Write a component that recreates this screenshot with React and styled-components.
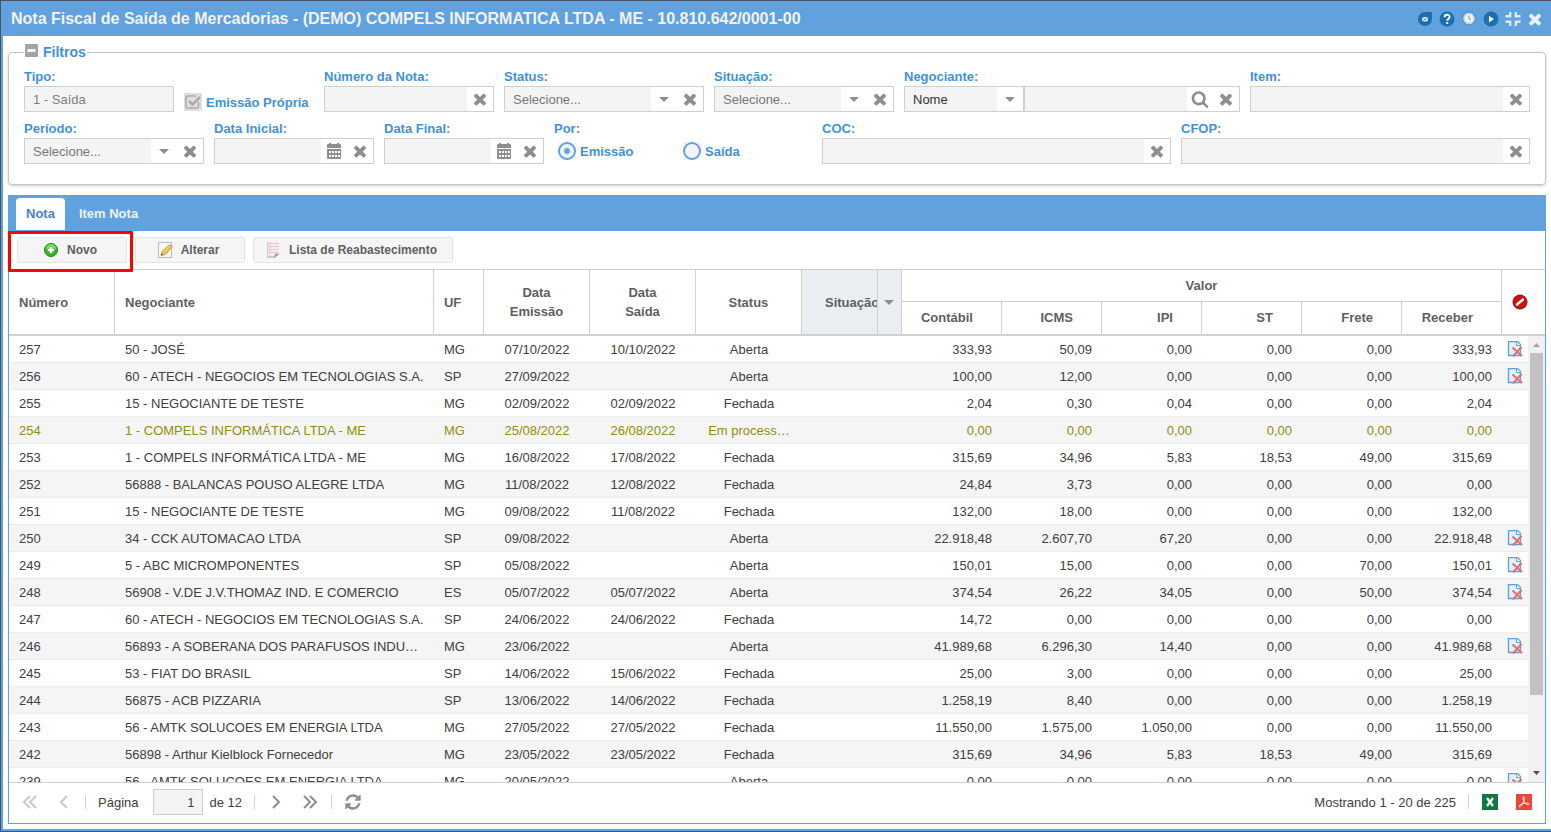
import { useState } from 'react';
import styled, { createGlobalStyle, css } from 'styled-components';

const NOTAS = [
  ['257', '50 - JOSÉ', 'MG', '07/10/2022', '10/10/2022', 'Aberta', '333,93', '50,09', '0,00', '0,00', '0,00', '333,93'],
  ['256', '60 - ATECH - NEGOCIOS EM TECNOLOGIAS S.A.', 'SP', '27/09/2022', '', 'Aberta', '100,00', '12,00', '0,00', '0,00', '0,00', '100,00'],
  ['255', '15 - NEGOCIANTE DE TESTE', 'MG', '02/09/2022', '02/09/2022', 'Fechada', '2,04', '0,30', '0,04', '0,00', '0,00', '2,04'],
  ['254', '1 - COMPELS INFORMÁTICA LTDA - ME', 'MG', '25/08/2022', '26/08/2022', 'Em process…', '0,00', '0,00', '0,00', '0,00', '0,00', '0,00'],
  ['253', '1 - COMPELS INFORMÁTICA LTDA - ME', 'MG', '16/08/2022', '17/08/2022', 'Fechada', '315,69', '34,96', '5,83', '18,53', '49,00', '315,69'],
  ['252', '56888 - BALANCAS POUSO ALEGRE LTDA', 'MG', '11/08/2022', '12/08/2022', 'Fechada', '24,84', '3,73', '0,00', '0,00', '0,00', '0,00'],
  ['251', '15 - NEGOCIANTE DE TESTE', 'MG', '09/08/2022', '11/08/2022', 'Fechada', '132,00', '18,00', '0,00', '0,00', '0,00', '132,00'],
  ['250', '34 - CCK AUTOMACAO LTDA', 'SP', '09/08/2022', '', 'Aberta', '22.918,48', '2.607,70', '67,20', '0,00', '0,00', '22.918,48'],
  ['249', '5 - ABC MICROMPONENTES', 'SP', '05/08/2022', '', 'Aberta', '150,01', '15,00', '0,00', '0,00', '70,00', '150,01'],
  ['248', '56908 - V.DE J.V.THOMAZ IND. E COMERCIO', 'ES', '05/07/2022', '05/07/2022', 'Aberta', '374,54', '26,22', '34,05', '0,00', '50,00', '374,54'],
  ['247', '60 - ATECH - NEGOCIOS EM TECNOLOGIAS S.A.', 'SP', '24/06/2022', '24/06/2022', 'Fechada', '14,72', '0,00', '0,00', '0,00', '0,00', '0,00'],
  ['246', '56893 - A SOBERANA DOS PARAFUSOS INDU…', 'MG', '23/06/2022', '', 'Aberta', '41.989,68', '6.296,30', '14,40', '0,00', '0,00', '41.989,68'],
  ['245', '53 - FIAT DO BRASIL', 'SP', '14/06/2022', '15/06/2022', 'Fechada', '25,00', '3,00', '0,00', '0,00', '0,00', '25,00'],
  ['244', '56875 - ACB PIZZARIA', 'SP', '13/06/2022', '14/06/2022', 'Fechada', '1.258,19', '8,40', '0,00', '0,00', '0,00', '1.258,19'],
  ['243', '56 - AMTK SOLUCOES EM ENERGIA LTDA', 'MG', '27/05/2022', '27/05/2022', 'Fechada', '11.550,00', '1.575,00', '1.050,00', '0,00', '0,00', '11.550,00'],
  ['242', '56898 - Arthur Kielblock Fornecedor', 'MG', '23/05/2022', '23/05/2022', 'Fechada', '315,69', '34,96', '5,83', '18,53', '49,00', '315,69'],
  ['239', '56 - AMTK SOLUCOES EM ENERGIA LTDA', 'MG', '20/05/2022', '', 'Aberta', '0,00', '0,00', '0,00', '0,00', '0,00', '0,00'],
];

const VALORES = ['Contábil', 'ICMS', 'IPI', 'ST', 'Frete', 'Receber'];

const PATHS = {
  times: 'M1490 1322q0 40-28 68l-136 136q-28 28-68 28t-68-28l-294-294-294 294q-28 28-68 28t-68-28l-136-136q-28-28-28-68t28-68l294-294-294-294q-28-28-28-68t28-68l136-136q28-28 68-28t68 28l294 294 294-294q28-28 68-28t68 28l136 136q28 28 28 68t-28 68l-294 294 294 294q28 28 28 68z',
  search: 'M1216 832q0-185-131.5-316.5t-316.5-131.5-316.5 131.5-131.5 316.5 131.5 316.5 316.5 131.5 316.5-131.5 131.5-316.5zm512 832q0 52-38 90t-90 38q-54 0-90-38l-343-342q-179 124-399 124-143 0-273.5-55.5t-225-150-150-225-55.5-273.5 55.5-273.5 150-225 225-150 273.5-55.5 273.5 55.5 225 150 150 225 55.5 273.5q0 220-124 399l343 343q37 37 37 90z',
  refresh: 'M1639 1056q0 5-1 7-64 268-268 434.5t-478 166.5q-146 0-282.5-55t-243.5-157l-129 129q-19 19-45 19t-45-19-19-45v-448q0-26 19-45t45-19h448q26 0 45 19t19 45-19 45l-137 137q71 66 161 102t187 36q134 0 250-65t186-179q11-17 53-117 8-23 30-23h192q13 0 22.5 9.5t9.5 22.5zm25-800v448q0 26-19 45t-45 19h-448q-26 0-45-19t-19-45 19-45l138-138q-148-137-349-137-134 0-250 65t-186 179q-11 17-53 117-8 23-30 23h-199q-13 0-22.5-9.5t-9.5-22.5v-7q65-268 270-434.5t480-166.5q146 0 284 55.5t245 156.5l130-129q19-19 45-19t45 19 19 45z',
};

function Glyph({ name, size }) {
  return (
    <svg width={size} height={size} viewBox="0 0 1792 1792" fill="currentColor" aria-hidden="true">
      <path d={PATHS[name]} />
    </svg>
  );
}

function Caret() {
  return (
    <svg width="10" height="5" viewBox="0 0 10 5" fill="currentColor" aria-hidden="true">
      <path d="M0 0h10L5 5z" />
    </svg>
  );
}

function Calendar() {
  return (
    <svg width="14" height="16" viewBox="0 0 14 16" fill="currentColor" aria-hidden="true">
      <path d="M2 0h2v1h6V0h2v1h1a1 1 0 0 1 1 1v3H0V2a1 1 0 0 1 1-1h1z" />
      <path fillRule="evenodd" d="M0 6h14v9a1 1 0 0 1-1 1H1a1 1 0 0 1-1-1zM2 8v2h2V8zM5 8v2h2V8zM8 8v2h2V8zM11 8v2h2V8zM2 12v2h2v-2zM5 12v2h2v-2zM8 12v2h2v-2zM11 12v2h2v-2z" />
    </svg>
  );
}

function Arrows({ left, double }) {
  const d = left ? 'M11 2L5 8l6 6' : 'M5 2l6 6-6 6';
  const dd = left ? 'M8 2L2 8l6 6M14 2L8 8l6 6' : 'M2 2l6 6-6 6M8 2l6 6-6 6';
  return (
    <svg width="16" height="16" viewBox="0 0 16 16" fill="none" stroke="currentColor" strokeWidth="2" aria-hidden="true">
      <path d={double ? dd : d} />
    </svg>
  );
}

function AddIcon() {
  return (
    <svg width="16" height="16" viewBox="0 0 16 16" aria-hidden="true">
      <circle cx="8" cy="8" r="6.500" fill="#35b521" stroke="#1d8a16" />
      <path d="M3 7a5 5 0 0 1 10 0c-3 1.500-7 1.500-10 0z" fill="#84d96f" />
      <path d="M6.500 4.500h3v2h2v3h-2v2h-3v-2h-2v-3h2z" fill="#fff" stroke="#2c9c1f" strokeWidth=".5" />
    </svg>
  );
}

function EditIcon() {
  return (
    <svg width="16" height="16" viewBox="0 0 16 16" aria-hidden="true">
      <rect x="1.500" y=".5" width="13" height="15" fill="#f8fafd" stroke="#b4bcc8" />
      <path d="M4 13.500l1-4L12 3l3 2.500-7 7z" fill="#f5c04c" stroke="#c08427" strokeWidth=".8" />
      <path d="M6 10l6.500-6" stroke="#fde6a0" />
      <path d="M12 3l1-1 3 2.500-1 1z" fill="#e9a08f" />
      <path d="M4 13.500l.5-2 1.500 1.300z" fill="#555" />
    </svg>
  );
}

function ListIcon() {
  return (
    <svg width="16" height="16" viewBox="0 0 16 16" aria-hidden="true">
      <path d="M2 0h12v12l-4 4H2z" fill="#f3eeee" />
      <path d="M2 0h1v16H2z" fill="#d0d0d0" />
      <path d="M3 1.500h11M3 4.500h11M3 7.500h11M3 10.500h11" stroke="#efc4c4" />
      <path d="M5 0v15" stroke="#e3c4c4" strokeWidth=".6" />
      <path d="M2 14h8l4-3v1l-4 4H2z" fill="#c9c9c9" />
      <path d="M9 16l1-4.500 4 .5z" fill="#9d9d9d" />
    </svg>
  );
}

function BlockIcon() {
  return (
    <svg width="16" height="16" viewBox="0 0 16 16" aria-hidden="true">
      <circle cx="8" cy="8" r="7" fill="#d90d0d" stroke="#7d1010" />
      <path d="M5 10.500l6-5" stroke="#fff" strokeWidth="2.400" strokeLinecap="round" />
    </svg>
  );
}

function CancelIcon() {
  return (
    <svg width="16" height="16" viewBox="0 0 16 16" aria-hidden="true">
      <path d="M1.500.5h9l3 3v11h-12z" fill="#e3f0fd" stroke="#5c9fe6" strokeWidth="1.300" />
      <path d="M9.500.5v4h4" fill="#fff" stroke="#5c9fe6" />
      <path d="M5.500 6.500l9.500 8.500M14.500 6L6 15.500" stroke="#e2726e" strokeWidth="2.200" />
    </svg>
  );
}

function ExcelIcon() {
  return (
    <svg width="16" height="16" viewBox="0 0 16 16" aria-hidden="true">
      <path d="M0 0h16v16H0z" fill="#0e7a41" />
      <path d="M5 4l6 8M11 4l-6 8" stroke="#fff" strokeWidth="2.200" />
    </svg>
  );
}

function PdfIcon() {
  return (
    <svg width="16" height="16" viewBox="0 0 16 16" aria-hidden="true">
      <path d="M0 0h16v16H0z" fill="#e8473a" />
      <path d="M7.500 2.500c1.500 0 .8 3.500-.3 6-1 2.200-2.600 4.500-3.900 4.300-1-.3.200-2 2.700-2.800 2.600-.9 6.600-1.300 6.900-.1.200 1.300-3 .5-4.400-1.400C7 6.500 6.500 2.700 7.500 2.500z" fill="none" stroke="#fff" strokeWidth=".9" />
    </svg>
  );
}

function Filtro({ id, label, largura, children }) {
  return (
    <Campo $largura={largura}>
      <Rotulo htmlFor={id}>{label}</Rotulo>
      <Caixa>{children}</Caixa>
    </Campo>
  );
}

function Limpar() {
  return (
    <Gatilho type="button" aria-label="Limpar">
      <Glyph name="times" size={18} />
    </Gatilho>
  );
}

function Combo({ id, label, largura }) {
  return (
    <Filtro id={id} label={label} largura={largura}>
      <Selecao id={id}>
        <option>Selecione...</option>
      </Selecao>
      <Seta><Caret /></Seta>
      <Limpar />
    </Filtro>
  );
}

function CampoData({ id, label }) {
  return (
    <Filtro id={id} label={label} largura={160}>
      <Entrada id={id} />
      <Gatilho type="button" aria-label="Abrir calendário"><Calendar /></Gatilho>
      <Limpar />
    </Filtro>
  );
}

function Colunas({ ultima }) {
  return (
    <colgroup>
      <Coluna $largura={106} />
      <Coluna />
      <Coluna $largura={50} />
      <Coluna $largura={106} />
      <Coluna $largura={106} />
      <Coluna $largura={106} />
      <Coluna $largura={100} />
      {VALORES.map((nome) => <Coluna key={nome} $largura={100} />)}
      <Coluna $largura={ultima} />
    </colgroup>
  );
}

function Titulo() {
  return (
    <BarraTitulo>
      <h1>Nota Fiscal de Saída de Mercadorias - (DEMO) COMPELS INFORMATICA LTDA - ME - 10.810.642/0001-00</h1>
      <Ferramentas>
        <button type="button" aria-label="Mensagens">
          <svg width="16" height="16" viewBox="0 0 16 16">
            <path d="M8 1h5.500a1.500 1.500 0 0 1 1.500 1.500V8A7 7 0 1 1 8 1z" fill="#1f6fae" />
            <ellipse cx="8" cy="8.300" rx="3" ry="2.200" fill="#e6f2fb" />
            <path d="M6.500 8.800l3-1" stroke="#1f6fae" />
          </svg>
        </button>
        <button type="button" aria-label="Ajuda">
          <svg width="16" height="16" viewBox="0 0 16 16">
            <circle cx="8" cy="8" r="7.500" fill="#1b6fae" />
            <path d="M5.500 6.200C5.500 2.900 10.700 3 10.600 6c0 1.800-2.400 1.800-2.400 3.800" fill="none" stroke="#fff" strokeWidth="1.900" />
            <path d="M7.200 11h2v2h-2z" fill="#fff" />
          </svg>
        </button>
        <button type="button" aria-label="Histórico">
          <svg width="16" height="16" viewBox="0 0 16 16">
            <circle cx="8" cy="7.500" r="6.500" fill="#a9cfe0" stroke="#4d86b3" />
            <circle cx="8" cy="7.500" r="4.500" fill="#eef3f4" stroke="#d5e6ec" />
            <path d="M8 4.500v3.500l2 1" fill="none" stroke="#7c919d" />
          </svg>
        </button>
        <button type="button" aria-label="Iniciar">
          <svg width="16" height="16" viewBox="0 0 16 16">
            <circle cx="8" cy="8" r="7.500" fill="#1f6fae" />
            <path d="M6 5l5 3-5 3.500z" fill="#fff" />
          </svg>
        </button>
        <button type="button" aria-label="Restaurar">
          <svg width="16" height="16" viewBox="0 0 16 16" fill="none" stroke="#dcebf9" strokeWidth="2.400">
            <path d="M5.200 1v4.200H.5M10.800 1v4.200h4.700M.5 10.800h4.700V15M15.500 10.800h-4.700V15" />
          </svg>
        </button>
        <button type="button" aria-label="Fechar">
          <Glyph name="times" size={18} />
        </button>
      </Ferramentas>
    </BarraTitulo>
  );
}

function Filtros() {
  const [por, setPor] = useState('emissao');

  return (
    <Quadro>
      <legend>
        <button type="button" aria-label="Recolher filtros">
          <svg width="13" height="13" viewBox="0 0 13 13">
            <rect width="13" height="13" rx="1" fill="#a3a3a3" />
            <path d="M2.500 5h8v3h-8z" fill="#fff" />
          </svg>
        </button>
        Filtros
      </legend>

      <Linha>
        <Filtro id="tipo" label="Tipo:" largura={150}>
          <Entrada id="tipo" defaultValue="1 - Saída" disabled />
        </Filtro>
        <Propria htmlFor="propria">
          <Marca>
            <input id="propria" type="checkbox" defaultChecked disabled />
            <svg width="18" height="18" viewBox="0 0 18 18" fill="none" stroke="#aaa" aria-hidden="true">
              <path d="M14.500 9v4a2 2 0 0 1-2 2H4a2 2 0 0 1-2-2V5a2 2 0 0 1 2-2h8" strokeWidth="1.500" />
              <path d="M5 8l3.500 3.500L16 4" strokeWidth="2.500" />
            </svg>
          </Marca>
          Emissão Própria
        </Propria>
        <Filtro id="numero" label="Número da Nota:" largura={170}>
          <Entrada id="numero" />
          <Limpar />
        </Filtro>
        <Combo id="status" label="Status:" largura={200} />
        <Combo id="situacao" label="Situação:" largura={180} />
        <Campo $largura={336}>
          <Rotulo htmlFor="negociante">Negociante:</Rotulo>
          <Par>
            <Caixa>
              <Selecao $forte aria-label="Buscar por">
                <option>Nome</option>
              </Selecao>
              <Seta><Caret /></Seta>
            </Caixa>
            <Caixa>
              <Entrada id="negociante" />
              <Gatilho type="button" aria-label="Pesquisar"><Glyph name="search" size={18} /></Gatilho>
              <Limpar />
            </Caixa>
          </Par>
        </Campo>
        <Filtro id="item" label="Item:">
          <Entrada id="item" />
          <Limpar />
        </Filtro>
      </Linha>

      <Linha>
        <Combo id="periodo" label="Período:" largura={180} />
        <CampoData id="inicial" label="Data Inicial:" />
        <CampoData id="final" label="Data Final:" />
        <Campo $largura={258} role="radiogroup" aria-labelledby="por">
          <Rotulo as="span" id="por">Por:</Rotulo>
          <Opcoes>
            <label>
              <span><input type="radio" name="por" checked={por === 'emissao'} onChange={() => setPor('emissao')} /></span>
              Emissão
            </label>
            <label>
              <span><input type="radio" name="por" checked={por === 'saida'} onChange={() => setPor('saida')} /></span>
              Saída
            </label>
          </Opcoes>
        </Campo>
        <Filtro id="coc" label="COC:">
          <Entrada id="coc" />
          <Limpar />
        </Filtro>
        <Filtro id="cfop" label="CFOP:">
          <Entrada id="cfop" />
          <Limpar />
        </Filtro>
      </Linha>
    </Quadro>
  );
}

function Grade() {
  return (
    <>
      <Cabecalho>
        <Colunas ultima={43} />
        <thead>
          <tr>
            <Th rowSpan={2}>Número</Th>
            <Th rowSpan={2}>Negociante</Th>
            <Th rowSpan={2}>UF</Th>
            <Th rowSpan={2} $alinhar="center">Data<br />Emissão</Th>
            <Th rowSpan={2} $alinhar="center">Data<br />Saída</Th>
            <Th rowSpan={2} $alinhar="center">Status</Th>
            <ThAtivo rowSpan={2}>
              <div>
                <span>Situação</span>
                <button type="button" aria-label="Opções da coluna"><Caret /></button>
              </div>
            </ThAtivo>
            <ThGrupo colSpan={6}>Valor</ThGrupo>
            <Th rowSpan={2} $ultima><BlockIcon /></Th>
          </tr>
          <tr>
            {VALORES.map((nome) => <ThValor key={nome}>{nome}</ThValor>)}
          </tr>
        </thead>
      </Cabecalho>

      <Corpo>
        <Rolagem>
          <Tabela>
            <Colunas ultima={26} />
            <tbody>
              {NOTAS.map(([numero, negociante, uf, emissao, saida, status, ...valores]) => (
                <Nota key={numero} $processando={numero === '254'}>
                  <Td>{numero}</Td>
                  <Td>{negociante}</Td>
                  <Td>{uf}</Td>
                  <Td $alinhar="center">{emissao}</Td>
                  <Td $alinhar="center">{saida}</Td>
                  <Td $alinhar="center">{status}</Td>
                  <Td />
                  {valores.map((valor, i) => <Td key={VALORES[i]} $alinhar="right">{valor}</Td>)}
                  <TdAcao>
                    {status === 'Aberta' && <button type="button" aria-label={`Cancelar nota ${numero}`}><CancelIcon /></button>}
                  </TdAcao>
                </Nota>
              ))}
            </tbody>
          </Tabela>
        </Rolagem>
        <Barra aria-hidden="true">
          <svg width="17" height="17" viewBox="0 0 17 17"><path d="M5 11h7L8.500 7z" fill="#a3a3a3" /></svg>
          <div><span /></div>
          <svg width="17" height="17" viewBox="0 0 17 17"><path d="M5 6h7l-3.500 4z" fill="#505050" /></svg>
        </Barra>
      </Corpo>
    </>
  );
}

function Paginacao() {
  return (
    <Rodape>
      <BotaoPagina type="button" disabled aria-label="Primeira página"><Arrows left double /></BotaoPagina>
      <BotaoPagina type="button" disabled aria-label="Página anterior"><Arrows left /></BotaoPagina>
      <Separador />
      <PaginaAtual>
        <label htmlFor="pagina">Página</label>
        <input id="pagina" defaultValue="1" />
        <span>de 12</span>
      </PaginaAtual>
      <Separador />
      <BotaoPagina type="button" aria-label="Próxima página"><Arrows /></BotaoPagina>
      <BotaoPagina type="button" aria-label="Última página"><Arrows double /></BotaoPagina>
      <Separador />
      <BotaoPagina type="button" aria-label="Atualizar"><Glyph name="refresh" size={18} /></BotaoPagina>
      <Resumo>Mostrando 1 - 20 de 225</Resumo>
      <Separador />
      <BotaoPagina type="button" aria-label="Exportar para Excel"><ExcelIcon /></BotaoPagina>
      <BotaoPagina type="button" aria-label="Exportar para PDF"><PdfIcon /></BotaoPagina>
    </Rodape>
  );
}

export default function App() {
  return (
    <Tela>
      <Global />
      <Janela>
        <Titulo />
        <Conteudo>
          <Filtros />
          <Painel>
            <Abas role="tablist">
              <Aba type="button" role="tab" aria-selected="true" $ativa>Nota</Aba>
              <Aba type="button" role="tab" aria-selected="false">Item Nota</Aba>
            </Abas>
            <Acoes>
              <Destaque>
                <Botao type="button" $largura={110}><AddIcon />Novo</Botao>
              </Destaque>
              <Botao type="button" $largura={110}><EditIcon />Alterar</Botao>
              <Botao type="button" $largura={200}><ListIcon />Lista de Reabastecimento</Botao>
            </Acoes>
            <Grade />
            <Paginacao />
          </Painel>
        </Conteudo>
      </Janela>
    </Tela>
  );
}

const Global = createGlobalStyle`
  * {
    box-sizing: border-box;
  }

  body {
    margin: 0;
    font-family: "Liberation Sans", Arial, sans-serif;
    font-size: 13px;
    color: #404040;
  }

  button, input, select {
    margin: 0;
    font: inherit;
    color: inherit;
  }

  button {
    padding: 0;
    border: 0;
    background: none;
    cursor: pointer;
  }

  svg {
    display: block;
    flex: none;
  }
`

const Tela = styled.div`
  height: 100vh;
  min-height: 500px;
  padding: 1px 0 1px 1px;
  background: #44546a;
`

const Janela = styled.div`
  height: 100%;
  display: flex;
  flex-direction: column;
  border-left: 2px solid #60a1de;
  border-bottom: 2px solid #60a1de;
  background: #fff;
`

const BarraTitulo = styled.header`
  height: 35px;
  padding: 0 8px;
  display: flex;
  align-items: center;
  justify-content: space-between;
  background: #60a1de;

  h1 {
    margin: 0;
    font-size: 16px;
    line-height: 20px;
    color: #f2f2f2;
  }
`

const Ferramentas = styled.div`
  display: flex;
  gap: 6px;
  color: #e9f2fb;

  button {
    width: 16px;
    height: 16px;
    display: flex;
    align-items: center;
    justify-content: center;
  }
`

const Conteudo = styled.main`
  flex: 1;
  min-height: 0;
  padding: 6px 5px 5px;
  display: flex;
  flex-direction: column;
  gap: 10px;
`

const Quadro = styled.fieldset`
  min-width: 0;
  margin: 0;
  padding: 4px 15px 20px;
  display: flex;
  flex-direction: column;
  gap: 6px;
  border: 1px solid #c4c4c4;
  border-radius: 4px;
  box-shadow: 0 1px 3px rgba(0, 0, 0, 0.2);

  legend {
    height: 20px;
    padding: 0 1px;
    display: flex;
    gap: 5px;
    font-weight: bold;
    font-size: 14px;
    line-height: 20px;
    color: #3e92d8;
  }

  legend button {
    height: 16px;
  }
`

const Linha = styled.div`
  display: flex;
  gap: 10px;
`

const Campo = styled.div`
  flex: ${({ $largura }) => ($largura ? `0 0 ${$largura}px` : '1 1 0')};
  min-width: 0;
`

const Rotulo = styled.label`
  display: block;
  height: 20px;
  font-weight: bold;
  line-height: 22px;
  color: #3e92d8;
`

const Caixa = styled.div`
  min-width: 0;
  height: 26px;
  display: flex;
  border: 1px solid #cfcfcf;
  background: #fff;
`

const Par = styled.div`
  display: grid;
  grid-template-columns: 120px 1fr;
`

const controle = css`
  flex: 1;
  min-width: 0;
  padding: 0 8px;
  border: 0;
  border-radius: 0;
  outline: 0;
  background: #f4f4f4;
`

const Entrada = styled.input`
  ${controle}

  &:disabled {
    color: #808080;
  }
`

const Selecao = styled.select`
  ${controle}
  appearance: none;
  color: ${({ $forte }) => ($forte ? '#333' : '#777')};
`

const Gatilho = styled.button`
  flex: 0 0 26px;
  display: flex;
  align-items: center;
  justify-content: center;
  color: #8e8e8e;
`

const Seta = styled.span`
  flex: 0 0 26px;
  display: flex;
  align-items: center;
  justify-content: center;
  color: #8e8e8e;
`

const Propria = styled.label`
  flex: 0 0 130px;
  align-self: flex-end;
  padding-bottom: 1px;
  display: flex;
  align-items: center;
  gap: 4px;
  font-weight: bold;
  color: #3e92d8;
`

const Marca = styled.span`
  display: grid;

  input, svg {
    grid-area: 1 / 1;
  }

  input {
    appearance: none;
    width: 18px;
    height: 18px;
    background: #dedede;
  }
`

const Opcoes = styled.div`
  height: 26px;
  padding-left: 4px;
  display: flex;
  align-items: center;

  label {
    width: 125px;
    display: flex;
    align-items: center;
    gap: 4px;
    font-weight: bold;
    color: #3e92d8;
  }

  span {
    background: #f4f4f4;
  }

  input {
    appearance: none;
    display: block;
    width: 18px;
    height: 18px;
    border: 2px solid #60a1de;
    border-radius: 50%;
  }

  input:checked {
    background: radial-gradient(circle, #60a1de 2px, transparent 4px);
  }
`

const Painel = styled.section`
  flex: 1;
  min-height: 0;
  display: flex;
  flex-direction: column;
  border: 1px solid #60a1de;
`

const Abas = styled.div`
  flex: 0 0 35px;
  padding: 2px 7px 1px;
  display: flex;
  gap: 4px;
  background: #60a1de;
`

const Aba = styled.button`
  padding: 0 10px 2px;
  border-radius: 4px 4px 0 0;
  font-weight: bold;
  color: ${({ $ativa }) => ($ativa ? '#4a83bd' : '#ecf3fa')};
  background: ${({ $ativa }) => ($ativa ? '#fff' : 'none')};
`

const Acoes = styled.div`
  padding: 6px 8px;
  display: flex;
  gap: 8px;
`

const Botao = styled.button`
  width: ${({ $largura }) => $largura}px;
  height: 26px;
  padding-right: 4px;
  display: flex;
  align-items: center;
  justify-content: center;
  gap: 8px;
  border: 1px solid #e4e4e4;
  border-radius: 3px;
  font-size: 12px;
  font-weight: bold;
  color: #606060;
  background: #f5f5f5;
`

const Destaque = styled.div`
  position: relative;

  &::after {
    content: "";
    position: absolute;
    inset: -6px -6px -9px -9px;
    border: 3px solid #f00;
    border-radius: 1px;
    pointer-events: none;
    z-index: 1;
  }
`

const Tabela = styled.table`
  width: 100%;
  table-layout: fixed;
  border-collapse: separate;
  border-spacing: 0;
`

const Cabecalho = styled(Tabela)`
  flex: none;
  border-top: 1px solid #d0d0d0;
  border-bottom: 2px solid #d0d0d0;
`

const Coluna = styled.col`
  width: ${({ $largura }) => ($largura ? `${$largura}px` : 'auto')};
`

const Th = styled.th`
  height: 32px;
  padding: 0 10px;
  border-right: ${({ $ultima }) => ($ultima ? 0 : '1px solid #d0d0d0')};
  line-height: 19px;
  text-align: ${({ $alinhar }) => $alinhar || 'left'};
  color: #606060;
`

const ThAtivo = styled(Th)`
  padding: 0;
  background: #e9eef3;

  div {
    height: 64px;
    display: flex;
    align-items: center;
  }

  span {
    flex: 1;
    padding-left: 23px;
    overflow: hidden;
    white-space: nowrap;
  }

  button {
    width: 24px;
    height: 100%;
    display: flex;
    align-items: center;
    justify-content: center;
    border-left: 1px solid #d0d0d0;
    color: #8e8e8e;
  }
`

const ThGrupo = styled(Th)`
  border-bottom: 1px solid #d0d0d0;
  text-align: center;
`

const ThValor = styled(Th)`
  padding: 0 28px 2px 10px;
  text-align: right;
`

const Corpo = styled.div`
  flex: 1;
  min-height: 0;
  display: flex;
`

const Rolagem = styled.div`
  flex: 1;
  overflow-y: auto;
  scrollbar-width: none;
`

const Nota = styled.tr`
  color: ${({ $processando }) => ($processando ? '#8f8f0e' : '#404040')};

  &:nth-child(even) {
    background: #f5f5f5;
  }
`

const Td = styled.td`
  height: 27px;
  padding: 0 10px;
  overflow: hidden;
  border-bottom: 1px solid #ededed;
  white-space: nowrap;
  text-align: ${({ $alinhar }) => $alinhar || 'left'};
`

const TdAcao = styled(Td)`
  padding: 0 5px;

  button {
    display: block;
  }
`

const Barra = styled.div`
  flex: 0 0 17px;
  display: flex;
  flex-direction: column;
  background: #f1f1f1;

  div {
    flex: 1;
    padding: 0 2px;
  }

  span {
    display: block;
    height: 83%;
    background: #c1c1c1;
  }
`

const Rodape = styled.footer`
  flex: 0 0 41px;
  padding: 0 4px 2px;
  display: flex;
  align-items: center;
  border-top: 1px solid #d0d0d0;
`

const BotaoPagina = styled.button`
  width: 34px;
  height: 26px;
  display: flex;
  align-items: center;
  justify-content: center;
  color: #8e8e8e;

  &:disabled {
    color: #c8c8c8;
  }
`

const Separador = styled.span`
  width: 1px;
  height: 14px;
  margin: 0 4px;
  background: #d0d0d0;
`

const PaginaAtual = styled.div`
  padding: 0 8px;
  display: flex;
  align-items: center;

  input {
    width: 50px;
    height: 26px;
    margin: 0 6px 0 15px;
    padding: 0 8px;
    border: 1px solid #cfcfcf;
    text-align: right;
    background: #f4f4f4;
  }
`

const Resumo = styled.span`
  margin-left: auto;
  padding-right: 8px;
`
